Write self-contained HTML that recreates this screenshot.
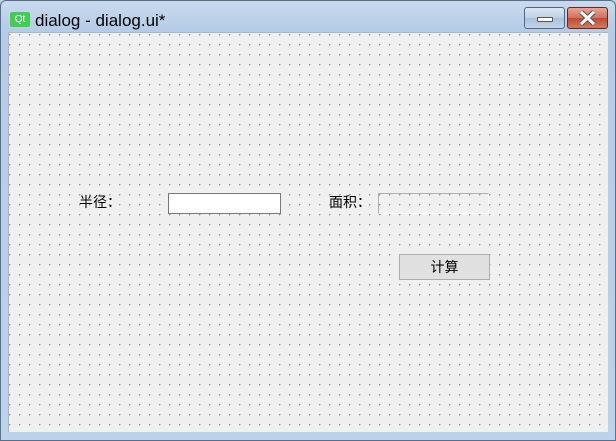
<!DOCTYPE html>
<html><head><meta charset="utf-8"><style>
*{margin:0;padding:0;box-sizing:border-box}
body{width:616px;height:441px;overflow:hidden;background:#bcd3ea;font-family:"Liberation Sans","Noto Sans CJK SC",sans-serif;position:relative}
.frame{position:absolute;left:0;top:0;width:616px;height:441px;border:1px solid #5a6f88;border-radius:6px 6px 0 0;background:linear-gradient(#c9daee 0,#b4cce7 30px,#bcd3ea 100%)}
.client{position:absolute;left:8px;top:32px;width:600px;height:400px;background-color:#f0f0f0;
background-image:radial-gradient(circle at 0.5px 0.5px,#9a9a9a 0.8px,transparent 0.9px);background-size:10px 10px;background-position:0 1px;border-left:1px solid #a8b8c8;border-top:1px solid #a8b8c8}
.title{position:absolute;left:35px;top:11px;font-size:17px;color:#000}
.qt{position:absolute;left:10px;top:12px;width:20px;height:15px;background:#41cd52;border-radius:2px;color:#fff;font-size:10px;line-height:15px;text-align:center}
.btn{position:absolute;top:7px;height:22px;border:1px solid #52677f;border-radius:3px}
.min{left:524px;width:41px;background:linear-gradient(#dbe6f3,#bfd0e6 50%,#a9bfdb 51%,#c4d6ec)}
.cls{left:567px;width:41px;background:linear-gradient(#e8a595,#d2705c 50%,#c24a33 51%,#d57a60);border-color:#5c2d25}
.lbl{position:absolute;font-size:14px;color:#000}
.in{position:absolute;background:#fff;border:1px solid #7a7a7a}
.dis{position:absolute;border:1px solid #b0b0b0;border-right-color:#fff;border-bottom-color:#fff}
.pb{position:absolute;left:399px;top:254px;width:91px;height:26px;background:#e1e1e1;border:1px solid #adadad;font-size:14px;text-align:center;line-height:24px}
</style></head><body>
<div class="frame"></div>
<div class="qt">Qt</div>
<div class="title">dialog - dialog.ui*</div>
<div class="btn min"><div style="position:absolute;left:12px;top:9px;width:16px;height:5px;background:#fff;border:1px solid #555;border-radius:1px"></div></div>
<div class="btn cls"><svg width="41" height="22" style="position:absolute;left:-1px;top:-1px"><path d="M14 5 L27 17 M27 5 L14 17" stroke="#555" stroke-width="5"/><path d="M14 5 L27 17 M27 5 L14 17" stroke="#fff" stroke-width="3"/></svg></div>
<div class="client"></div>
<div class="lbl" style="left:79px;top:192px">半径：</div>
<div class="in" style="left:168px;top:193px;width:113px;height:21px"></div>
<div class="lbl" style="left:329px;top:192px">面积：</div>
<div class="dis" style="left:378px;top:193px;width:111px;height:21px"></div>
<div class="pb">计算</div>
</body></html>
